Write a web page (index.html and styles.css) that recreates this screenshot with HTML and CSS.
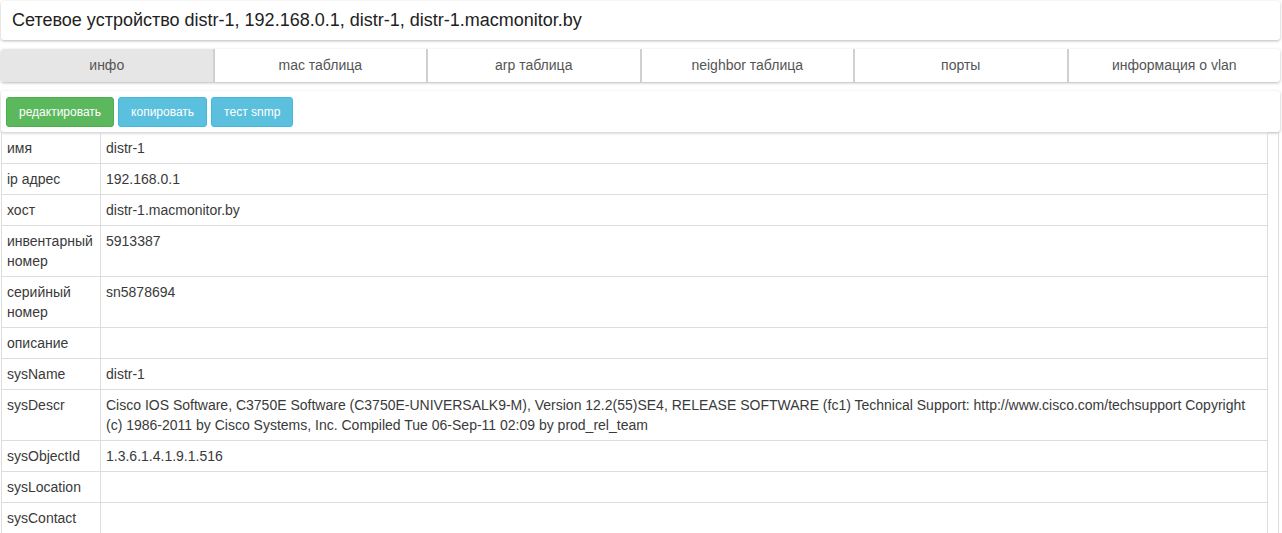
FILE: index.html
```html
<!DOCTYPE html>
<html lang="ru">
<head>
<meta charset="utf-8">
<title>Сетевое устройство distr-1</title>
<link rel="stylesheet" href="styles.css">
</head>
<body>
<div class="page">
  <div class="card header">Сетевое устройство distr-1, 192.168.0.1, distr-1, distr-1.macmonitor.by</div>
  <div class="card tabs">
    <div class="tab active">инфо</div>
    <div class="tab">mac таблица</div>
    <div class="tab">arp таблица</div>
    <div class="tab">neighbor таблица</div>
    <div class="tab">порты</div>
    <div class="tab">информация о vlan</div>
  </div>
  <div class="card actions">
    <button class="btn btn-green">редактировать</button>
    <button class="btn btn-cyan">копировать</button>
    <button class="btn btn-cyan">тест snmp</button>
  </div>
  <div class="table-wrap">
    <table class="info">
      <tr><td class="key">имя</td><td>distr-1</td></tr>
      <tr><td class="key">ip адрес</td><td>192.168.0.1</td></tr>
      <tr><td class="key">хост</td><td>distr-1.macmonitor.by</td></tr>
      <tr><td class="key">инвентарный номер</td><td>5913387</td></tr>
      <tr><td class="key">серийный номер</td><td>sn5878694</td></tr>
      <tr><td class="key">описание</td><td></td></tr>
      <tr><td class="key">sysName</td><td>distr-1</td></tr>
      <tr><td class="key">sysDescr</td><td>Cisco IOS Software, C3750E Software (C3750E-UNIVERSALK9-M), Version 12.2(55)SE4, RELEASE SOFTWARE (fc1) Technical Support: http://www.cisco.com/techsupport Copyright (c) 1986-2011 by Cisco Systems, Inc. Compiled Tue 06-Sep-11 02:09 by prod_rel_team</td></tr>
      <tr><td class="key">sysObjectId</td><td>1.3.6.1.4.1.9.1.516</td></tr>
      <tr><td class="key">sysLocation</td><td></td></tr>
      <tr><td class="key">sysContact</td><td></td></tr>
    </table>
  </div>
</div>
</body>
</html>
```
FILE: styles.css
```css
html, body {
  margin: 0;
  padding: 0;
  background: #ffffff;
}
body {
  font-family: "Liberation Sans", Arial, sans-serif;
  color: #333333;
  font-size: 14px;
}
.page {
  padding: 1px 2px 0 1px;
  display: flex;
  flex-direction: column;
}
.card {
  background: #ffffff;
  border-radius: 3px;
  box-shadow: 0 1px 3px rgba(0, 0, 0, 0.28);
}
.header {
  height: 39px;
  box-sizing: border-box;
  padding: 8px 11px 0;
  font-size: 18px;
  line-height: 22px;
  color: #222;
}
.tabs {
  margin-top: 9px;
  height: 33px;
  display: flex;
  overflow: hidden;
}
.tab {
  flex: 1;
  text-align: center;
  line-height: 33px;
  font-size: 14px;
  color: #555;
  border-left: 2px solid #d0d0d0;
}
.tab:first-child {
  border-left: none;
}
.tab.active {
  background: #e6e6e6;
}
.actions {
  margin-top: 9px;
  height: 41px;
  box-sizing: border-box;
  padding: 6px 5px 0;
  display: flex;
  gap: 4px;
  align-items: flex-start;
}
.btn {
  height: 30px;
  border: 1px solid transparent;
  border-radius: 3px;
  color: #ffffff;
  font-family: "Liberation Sans", Arial, sans-serif;
  font-size: 12px;
  padding: 0 12px;
  margin: 0;
}
.btn-green {
  background: #5cb85c;
  border-color: #4cae4c;
}
.btn-cyan {
  background: #5bc0de;
  border-color: #46b8da;
}
.table-wrap {
  border-right: 1px solid #dddddd;
  margin-right: 1px;
}
.info {
  width: calc(100% - 10px);
  border-collapse: collapse;
}
.info td {
  border: 1px solid #dddddd;
  padding: 5px;
  line-height: 20px;
  vertical-align: top;
  font-size: 14px;
  color: #3a3a3a;
}
.info td.key {
  width: 88px;
}
```
